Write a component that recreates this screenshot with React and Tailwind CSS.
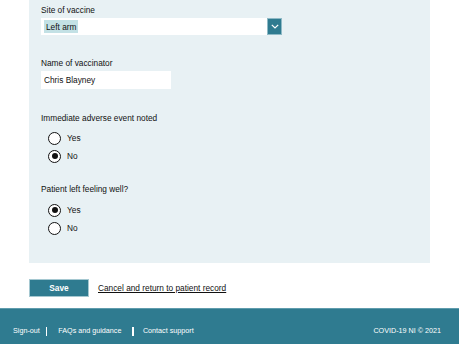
import React, { useState } from "react";

function Radio({ name, label, checked, onChange }) {
  return (
    <label className="flex items-center h-[18px] pl-[7px] cursor-pointer">
      <input type="radio" name={name} checked={checked} onChange={onChange} className="sr-only" />
      <span className="w-[13px] h-[13px] rounded-full border border-[#111] bg-white flex items-center justify-center">
        {checked && <span className="w-[6px] h-[6px] rounded-full bg-[#111]" />}
      </span>
      <span className="ml-[6px]">{label}</span>
    </label>
  );
}

export default function App() {
  const [adverse, setAdverse] = useState("no");
  const [well, setWell] = useState("yes");
  const [name, setName] = useState("Chris Blayney");

  return (
    <div
      className="w-full h-[344px] overflow-hidden flex flex-col bg-white text-[#111] text-[8.3px] leading-[10px]"
      style={{ fontFamily: '"Liberation Sans", Arial, sans-serif' }}
    >
      <div className="px-[29px]">
        <div className="bg-[#e8f1f4] pl-[12px] pt-[5px] pb-[26px]">
          <div>Site of vaccine</div>
          <div className="mt-[3px] flex w-[241px] h-[17px]">
            <div className="flex-1 bg-white flex items-center pl-[3px]">
              <span className="bg-[#c3e1e5] px-[2px] h-[13px] flex items-center">Left arm</span>
            </div>
            <div className="w-[15px] bg-[#2f7b90] border border-[#8fbac6] flex items-center justify-center">
              <svg width="8" height="5" viewBox="0 0 8 5" fill="none">
                <path d="M0.8 0.8 L4 4 L7.2 0.8" stroke="white" strokeWidth="1.2" />
              </svg>
            </div>
          </div>

          <div className="mt-[23px]">Name of vaccinator</div>
          <input
            value={name}
            onChange={(e) => setName(e.target.value)}
            className="mt-[3px] block w-[130px] h-[18px] bg-white px-[3px] outline-none"
          />

          <div className="mt-[24px]">Immediate adverse event noted</div>
          <div className="mt-[6px]">
            <Radio name="adverse" label="Yes" checked={adverse === "yes"} onChange={() => setAdverse("yes")} />
            <Radio name="adverse" label="No" checked={adverse === "no"} onChange={() => setAdverse("no")} />
          </div>

          <div className="mt-[19px]">Patient left feeling well?</div>
          <div className="mt-[7px]">
            <Radio name="well" label="Yes" checked={well === "yes"} onChange={() => setWell("yes")} />
            <Radio name="well" label="No" checked={well === "no"} onChange={() => setWell("no")} />
          </div>
        </div>

        <div className="mt-[16px] flex items-center">
          <button className="w-[60px] h-[18px] bg-[#2f7b90] border border-[#a5c8d1] text-white font-bold">
            Save
          </button>
          <a href="#" className="ml-[9px] underline text-[#111]">
            Cancel and return to patient record
          </a>
        </div>
      </div>

      <footer className="mt-[11px] flex-1 bg-[#2f7b90] border-t border-[#5f9cad] text-white text-[7.2px] flex items-start justify-between pt-[17px] pl-[13px] pr-[18px]">
        <div className="flex items-center">
          <span>Sign-out</span>
          <span className="mx-[6px] w-[1.5px] h-[9px] bg-white" />
          <span className="ml-[5px]">FAQs and guidance</span>
          <span className="ml-[11px] mr-[9px] w-[1.5px] h-[9px] bg-white" />
          <span>Contact support</span>
        </div>
        <span>COVID-19 NI © 2021</span>
      </footer>
    </div>
  );
}
